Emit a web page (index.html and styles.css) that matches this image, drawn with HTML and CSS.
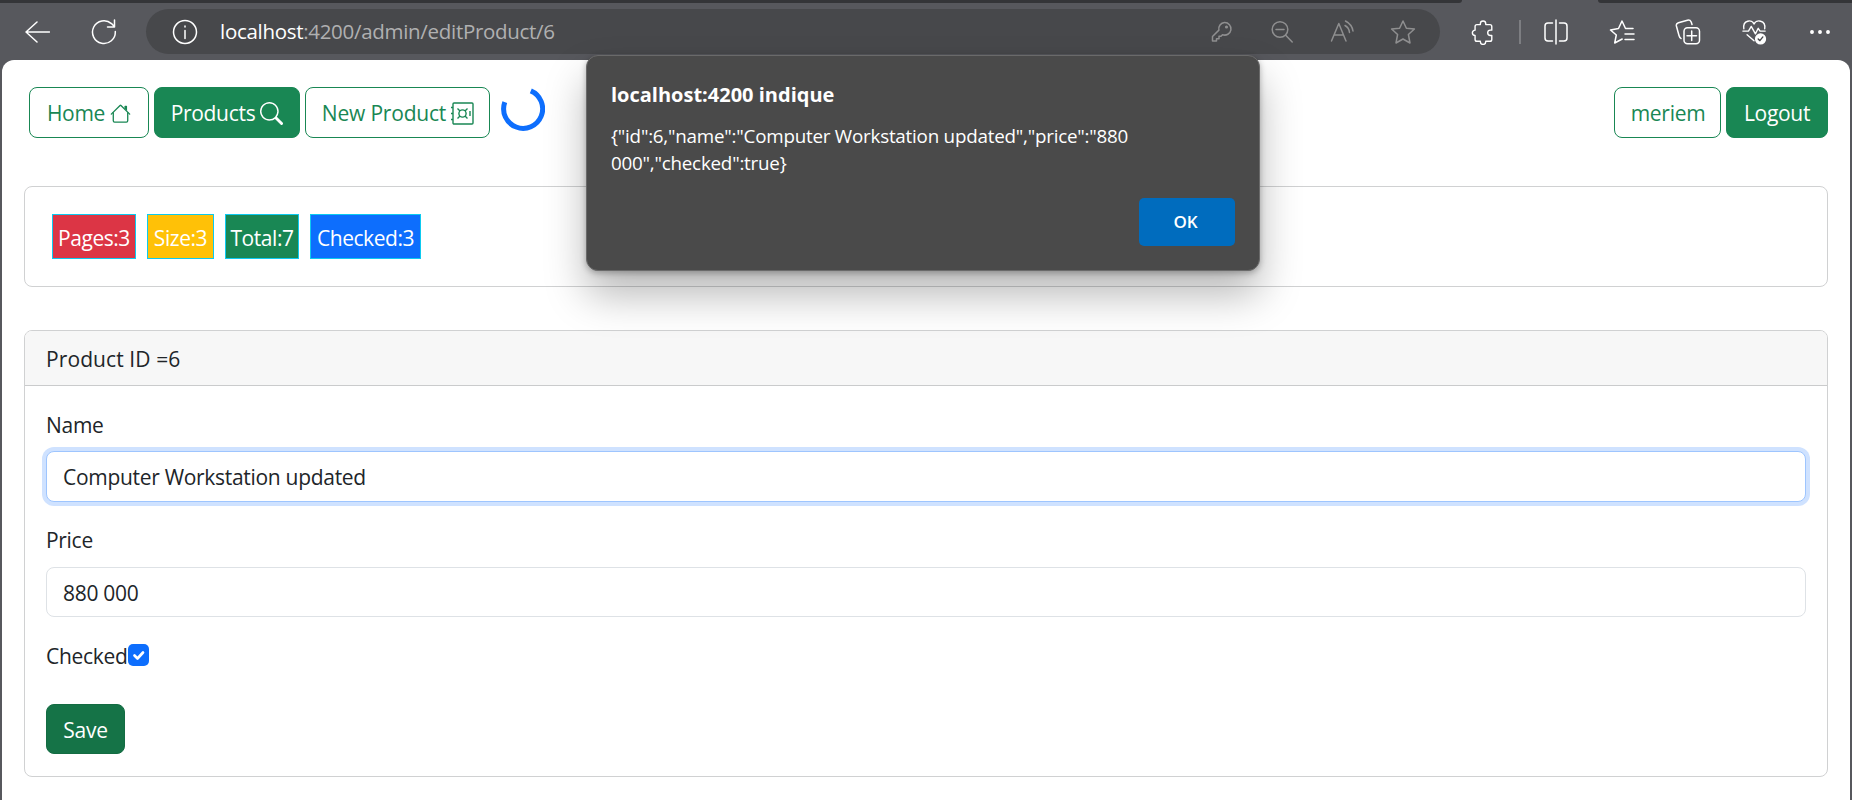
FILE: index.html
```html
<!DOCTYPE html>
<html lang="fr">
<head>
<meta charset="utf-8">
<title>Edit product</title>
<link rel="stylesheet" href="styles.css">
</head>
<body>
<div class="browser">
  <div class="tabstrip"><div class="tabs-left"></div><div class="tabs-right"></div></div>
  <header class="toolbar">
    <svg class="ico back" width="26" height="24" viewBox="0 0 26 24"><path d="M13 2 2 12l11 10M2 12h23.500"/></svg>
    <svg class="ico reload" width="26" height="26" viewBox="0 0 26 26"><path d="M24.300 12.500A11.400 11.400 0 1 1 20.500 4.600l2.800 3M23.500 1v7h-7"/></svg>
    <div class="address">
      <svg class="ico" width="26" height="26" viewBox="0 0 26 26"><circle cx="13" cy="13" r="11.500"/><path d="M13 11.500v8M13 7v1"/></svg>
      <div class="url"><b>localhost</b>:4200/admin/editProduct/6</div>
      <div class="address-actions">
        <svg class="ico dim" width="24" height="26" viewBox="0 0 24 26"><path d="M14.500 3.500a6.300 6.300 0 1 1-2 12.200l-1.500 1.500H9v2.500H6.500V22H2.500v-4.500l6.400-6.400A6.300 6.300 0 0 1 14.500 3.500Z"/><circle cx="16.500" cy="8" r=".8"/></svg>
        <svg class="ico dim" width="24" height="26" viewBox="0 0 24 26"><circle cx="10" cy="10.500" r="7.800"/><path d="M6 10.500h8M15.700 16.200l6.500 6.800"/></svg>
        <svg class="ico dim" width="24" height="26" viewBox="0 0 24 26"><path d="M1.500 22 8.800 4.500 16 22M4 16h9.500M15 6.500q4 2.200 4.500 7M15.500 2q6.500 3.500 7.500 10"/></svg>
        <svg class="ico dim" width="26" height="26" viewBox="0 0 26 26"><path d="m13 2 3.400 7.200 8 .8-6 5.500 1.600 8.500-7-4-7 4 1.600-8.500-6-5.500 8-.8Z"/></svg>
      </div>
    </div>
    <div class="actions">
      <svg class="ico" width="25" height="26" viewBox="0 0 26 28"><path d="M5 12V8a2 2 0 0 1 2-2h3.700V5a2.900 2.900 0 0 1 5.800 0v1H21a2 2 0 0 1 2 2v4h-1.500a2.900 2.900 0 0 0 0 5.800H23V22a2 2 0 0 1-2 2h-4.500v.500a2.900 2.900 0 0 1-5.800 0V24H7a2 2 0 0 1-2-2v-4.200a2.900 2.900 0 0 1 0-5.800Z"/></svg>
      <i class="separator"></i>
      <svg class="ico" width="26" height="26" viewBox="0 0 26 26"><path d="M9.500 4H5a3 3 0 0 0-3 3v12a3 3 0 0 0 3 3h4.500M16.500 4H21a3 3 0 0 1 3 3v12a3 3 0 0 1-3 3h-4.500M13 1v24"/></svg>
      <svg class="ico" width="26" height="26" viewBox="0 0 26 26"><path d="M24 9.500h-7.500L13 2 9.500 9.500 1.500 11l5.800 5L5.700 24l7.500-4M16 15h9M16 20.500h9"/></svg>
      <svg class="ico" width="26" height="26" viewBox="0 0 26 26"><path d="M6 19.500q-1.500-1-2-3L1.400 7q-.6-2.500 2-3.300l9-2.500q2.600-.6 3.800 1.800L17 5.500"/><rect x="9" y="8.700" width="15.500" height="16" rx="3.500"/><path d="M16.700 12v9.500M12 16.700h9.500"/></svg>
      <svg class="ico" width="27" height="26" viewBox="0 0 27 28"><path d="M2 10.500C.5 1 11 0 13 5.500 15 0 26 1 24.500 10.500M1 13h6l3-5 4.500 8 3-6 2 3h5.500M5.500 17l7.500 6.500"/><circle class="solid" cx="20" cy="21.500" r="5.300"/><path class="tick" d="m17.500 21.500 1.800 1.800 3.200-4"/></svg>
      <svg class="ico" width="24" height="26" viewBox="0 0 24 26"><g class="solid"><circle cx="4" cy="13" r="1.200"/><circle cx="12" cy="13" r="1.200"/><circle cx="20" cy="13" r="1.200"/></g></svg>
    </div>
  </header>
  <main class="page">
    <nav class="nav">
      <a class="btn outline home">Home <svg width="21" height="21" viewBox="0 0 16 16" fill="currentColor"><path fill-rule="evenodd" d="M2 13.500V7h1v6.500a.5.5 0 0 0 .5.5h9a.5.5 0 0 0 .5-.5V7h1v6.500a1.500 1.500 0 0 1-1.500 1.500h-9A1.500 1.500 0 0 1 2 13.500zm11-11V6l-2-2V2.500a.5.5 0 0 1 .5-.5h1a.5.5 0 0 1 .5.5z"/><path fill-rule="evenodd" d="M7.293 1.500a1 1 0 0 1 1.414 0l6.647 6.646a.5.5 0 0 1-.708.708L8 2.207 1.354 8.854a.5.5 0 1 1-.708-.708z"/></svg></a>
      <a class="btn filled products">Products <svg width="23" height="23" viewBox="0 0 16 16" fill="currentColor"><path d="M11.742 10.344a6.500 6.500 0 1 0-1.397 1.398h-.001c.03.04.062.078.098.115l3.850 3.850a1 1 0 0 0 1.415-1.414l-3.850-3.850a1.007 1.007 0 0 0-.115-.1zM12 6.500a5.500 5.500 0 1 1-11 0 5.500 5.500 0 0 1 11 0z"/></svg></a>
      <a class="btn outline new">New Product <svg width="23" height="23" viewBox="0 0 23 23" fill="none" stroke="currentColor" stroke-width="1.4"><rect x="2" y="1" width="20" height="21" rx="1"/><path d="M0 5.500h2M0 11.500h2M0 17.500h2"/><circle cx="11.500" cy="11.500" r="3.600"/><path d="m6.500 6.500 2.500 2.500M16.500 6.500 14 9M6.500 16.500 9 14M16.500 16.500 14 14M19 9v5"/></svg></a>
      <svg class="spinner" width="44" height="44" viewBox="0 0 44 44"><path d="M29.800 3.900A19.500 19.500 0 1 1 3.800 15.200"/></svg>
      <a class="btn outline user">meriem</a>
      <a class="btn filled logout">Logout</a>
    </nav>
    <section class="card stats">
      <span class="stat pages">Pages:3</span><span class="stat size">Size:3</span><span class="stat total">Total:7</span><span class="stat checked">Checked:3</span>
    </section>
    <section class="card product">
      <div class="card-header">Product ID =6</div>
      <form class="card-body">
        <label class="name-label" for="name">Name</label>
        <input class="field focused" id="name" value="Computer Workstation updated">
        <label class="price-label" for="price">Price</label>
        <input class="field" id="price" value="880 000">
        <div class="check-row"><span>Checked</span><svg class="check" width="21" height="22" viewBox="0 0 21 22"><path d="m6.500 11.500 3 3 5.500-6"/></svg></div>
        <button class="btn save" type="button">Save</button>
      </form>
    </section>
  </main>
  <div class="dialog">
    <h1>localhost:4200 indique</h1>
    <p>{"id":6,"name":"Computer Workstation updated","price":"880<br>000","checked":true}</p>
    <button class="ok" type="button">OK</button>
  </div>
</div>
</body>
</html>
```
FILE: styles.css
```css
* { box-sizing: border-box; }
body {
  margin: 0;
  font: 21px/33px "Open Sans", "Noto Sans", sans-serif;
  letter-spacing: -0.3px;
  color: #212529;
  background: #57585d;
}
.browser { position: relative; width: 1852px; height: 800px; overflow: hidden; display: flex; flex-direction: column; }
.tabstrip { height: 3px; display: flex; justify-content: space-between; }
.tabs-left, .tabs-right { background: #343538; }
.tabs-left { width: 1462px; border-bottom-right-radius: 3px; }
.tabs-right { width: 254px; border-bottom-left-radius: 3px; }

.toolbar { height: 57px; display: flex; align-items: center; padding: 0 20px 0 24px; }
.ico { display: block; flex: none; fill: none; stroke: #fff; stroke-width: 1.5; stroke-linejoin: round; stroke-linecap: round; }
.back { margin-right: 41px; }
.reload { margin-right: 29px; }
.dim { stroke: #8f8f90; }
.solid { fill: #fff; stroke: #fff; }
.tick { stroke: #47484b; }
.address {
  width: 1294px; height: 45px; border-radius: 23px; background: #47484b;
  display: flex; align-items: center; padding: 0 24px 0 26px; margin: 0 30px 0 0;
}
.url { flex: 1; margin-left: 22px; font-size: 20.5px; letter-spacing: -0.3px; color: #b0b0b1; }
.url b { font-weight: 400; color: #fff; }
.address-actions { display: flex; gap: 36px; }
.actions { display: flex; align-items: center; gap: 40px; }
.separator { width: 2px; height: 24px; margin: 0 -18px 0 -16px; background: #7d7e82; }

.page { flex: 1; margin: 0 2px; padding: 27px 22px 0; background: #fff; border-radius: 12px 12px 0 0; }
.nav { display: flex; padding-left: 5px; }
.btn {
  display: flex; align-items: center; justify-content: center; gap: 6px; height: 51px; padding-top: 1px;
  border: 1px solid #198754; border-radius: 8px; white-space: nowrap;
}
.btn svg { flex: none; }
.outline { color: #198754; }
.filled { color: #fff; background: #198754; }
.home { width: 120px; margin-right: 5px; gap: 5px; }
.products { width: 146px; margin-right: 5px; gap: 5px; }
.new { width: 185px; gap: 5px; letter-spacing: -0.2px; padding-left: 1px; }
.spinner { margin-left: 11px; fill: none; stroke: #0d6efd; stroke-width: 5; }
.user { width: 107px; margin: 0 5px 0 auto; padding-left: 1px; }
.logout { width: 102px; }

.card { border: 1px solid #d0d1d2; border-radius: 8px; }
.stats { height: 101px; margin-top: 48px; padding: 27px; display: flex; gap: 11px; }
.stat { height: 45px; border: 1px solid #0dcaf0; color: #fff; line-height: 47px; text-align: center; letter-spacing: -0.45px; white-space: nowrap; }
.pages { width: 84px; background: #dc3545; }
.size { width: 67px; background: #ffc107; }
.total { width: 74px; background: #198754; }
.checked { width: 111px; background: #0d6efd; }

.product { height: 447px; margin-top: 43px; overflow: hidden; }
.card-header { height: 55px; padding: 12px 21px 0; background: #f7f7f7; border-bottom: 1px solid #cacbcc; letter-spacing: 0.1px; }
.card-body { display: flex; flex-direction: column; padding: 23px 21px 0; }
.field {
  height: 50px; padding: 1px 16px 0; border: 1px solid #dee2e6; border-radius: 8px; outline: 0;
  font: inherit; letter-spacing: inherit; color: inherit; background: #fff;
}
.focused { height: 51px; border-color: #9ec5fe; box-shadow: 0 0 0 4px #cfe2ff; }
.name-label { margin-bottom: 9px; }
.price-label { margin: 22px 0 10px; }
.check-row { display: flex; margin-top: 23px; height: 33px; }
.check-row span { width: 82px; }
.check { margin-top: 4px; border-radius: 5px; background: #0d6efd; fill: none; stroke: #fff; stroke-width: 2.7; stroke-linecap: round; stroke-linejoin: round; }
.save { width: 79px; height: 50px; margin-top: 31px; padding-top: 3px; font: inherit; letter-spacing: inherit; color: #fff; background: #157347; border-color: #146c43; }

.dialog {
  position: absolute; left: 586px; top: 55px; width: 674px; height: 216px; padding: 24px;
  display: flex; flex-direction: column; border: 1px solid #6a6a6a; border-radius: 12px;
  background: #4a4a4a; color: #fff; box-shadow: 0 2px 6px rgba(0,0,0,.28), 0 24px 42px rgba(0,0,0,.28);
}
.dialog h1 { margin: 1px 0 0; font-size: 20px; line-height: 27px; font-weight: 700; letter-spacing: 0; }
.dialog p { margin: 15px 0 0; font-size: 18.8px; line-height: 27px; letter-spacing: -0.22px; white-space: nowrap; }
.ok { width: 96px; height: 48px; margin: 21px 0 0 auto; padding: 0 3px 2px 0; border: 0; border-radius: 5px; background: #006cbe; color: #fff; font: 600 17px "Open Sans", sans-serif; }
```
